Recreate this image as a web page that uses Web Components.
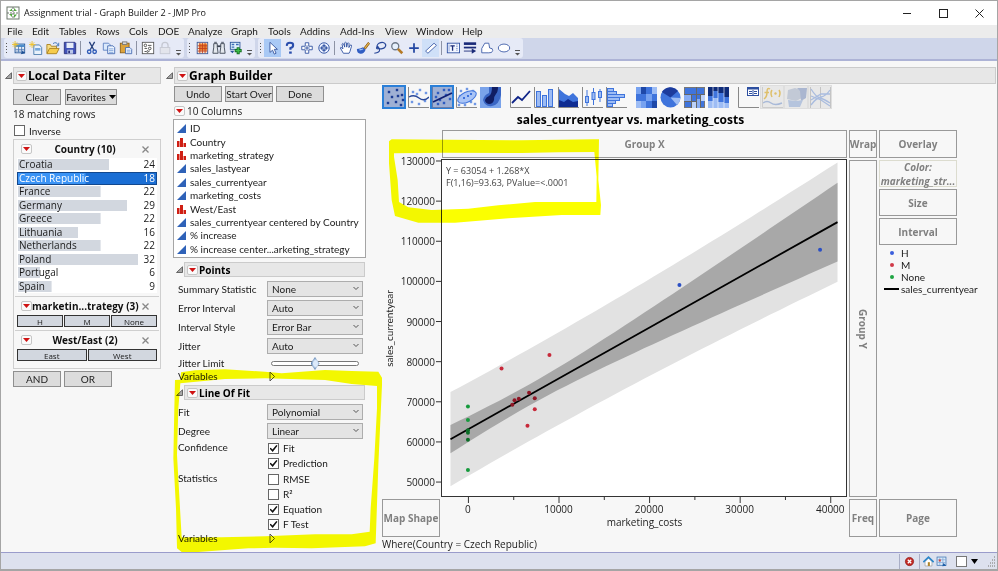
<!DOCTYPE html>
<html lang="en">
<head>
<meta charset="utf-8">
<title>Assignment trial - Graph Builder 2 - JMP Pro</title>
<style>
html,body{height:100%}
body{margin:0;background:#a5a5a5;font:10px/14px "Open Sans","Noto Sans",sans-serif;color:#1a1a1a;--narrow:Lato,"Open Sans",sans-serif}
</style>
</head>
<body>
<app-window></app-window>
<script>
const BASE = `*,:host{box-sizing:border-box}button,select,input{font:inherit;color:inherit;margin:0}button{cursor:default}`;
function define(name, css, html, setup){
  customElements.define(name, class extends HTMLElement{
    connectedCallback(){
      if(this.shadowRoot) return;
      const root = this.attachShadow({mode:'open'});
      root.innerHTML = `<style>${BASE}${css}</style>` + (typeof html === 'function' ? html(this) : html);
      if(setup) setup(this, root);
    }
  });
}

/* ---------- icons ---------- */
const dots = (pts, c, r=1) => pts.map(p=>`<rect x="${p[0]-r}" y="${p[1]-r}" width="${2*r}" height="${2*r}" fill="${c}"/>`).join('');
const axes = '<path d="M.5 0V20.5H21" fill="none" stroke="#888"/>';
const I16 = {
  app:'<rect x="2" y="2" width="12" height="12" fill="#fff" stroke="#6b776b"/><path d="M8 2V14M2 8H14" stroke="#6b776b" stroke-dasharray="2 1"/><path d="M4 6h3V3.500zM9 3v3h3zM4 9h3v3zM9 13V9.500h3z" fill="#55a843"/>',
  newtable:'<rect x="3.500" y="3.500" width="11" height="10" fill="#fff" stroke="#1c4f94"/><rect x="4" y="4" width="10" height="3" fill="#4d8fce"/><path d="M4 9.500H14M4 11.500H14M7.500 6V13M11 6V13" stroke="#4f79b5"/><path d="M3.500 0V8M0 4H7.500M1 1.500l5 5M6 1.500l-5 5" stroke="#f0c22e"/><path d="M10 15l2-4 3 3z" fill="#1c4f94"/>',
  newscript:'<path d="M5.500 4.500H12l2.500 3V15.500H5.500z" fill="#e8f1fb" stroke="#4477aa"/><rect x="7" y="8" width="6" height="3" fill="#74a7db"/><path d="M3.500 0V8M0 4H7.500M1 1.500l5 5M6 1.500l-5 5" stroke="#f0c22e"/>',
  open:'<path d="M1 14V4h4l1 2h6v3" fill="#f7dc83" stroke="#a87f1d"/><path d="M1 14.500L4 8.500H15L12 14.500z" fill="#f6cc4d" stroke="#a87f1d"/><path d="M8 3q4-3 6 2M14.500 2v3.500h-3" fill="none" stroke="#3a70b5"/>',
  save:'<path d="M1.500 1.500h12l1 1v12H1.500z" fill="#4152b8" stroke="#29307c"/><rect x="4" y="2" width="8" height="6" fill="#e6ecf8"/><rect x="5" y="10" width="6.500" height="4.500" fill="#b9c6e8"/><rect x="6" y="11" width="2" height="3" fill="#29307c"/>',
  cut:'<path d="M5 1L10 10M11 1L6 10" stroke="#26407c" stroke-width="1.500"/><circle cx="4.800" cy="12.300" r="2" fill="none" stroke="#2c59b6" stroke-width="1.500"/><circle cx="11" cy="12.300" r="2" fill="none" stroke="#2c59b6" stroke-width="1.500"/>',
  copy:'<path d="M1.500 2.500h6l2 2v6H1.500z" fill="#dbe9fb" stroke="#5a7fc0"/><path d="M6.500 5.500h6l2 2v7h-8z" fill="#eef5ff" stroke="#4168b0"/><path d="M8 9h5M8 11h5M8 13h5" stroke="#7ba0d8"/>',
  paste:'<rect x="1.500" y="2.500" width="10" height="11" fill="#dca33c" stroke="#8a5f17"/><rect x="4" y="1" width="5" height="3" fill="#d9d9d9" stroke="#777"/><path d="M7.500 7.500h5l2 2v5h-7z" fill="#eef5ff" stroke="#4168b0"/><path d="M9 10.500h4M9 12.500h4" stroke="#7ba0d8"/>',
  prefs:'<rect x="1.500" y="1.500" width="13" height="13" fill="#fff" stroke="#555"/><circle cx="5" cy="5" r="1.500" fill="none" stroke="#444"/><path d="M8 5h4M4 8.500h3M9 11.500h1M4 12h2" stroke="#444"/><circle cx="10" cy="8.500" r="1.500" fill="none" stroke="#444"/><circle cx="7.500" cy="12" r="1" fill="none" stroke="#444"/>',
  lock:'<path d="M4.500 8V5a3.500 3.500 0 0 1 7 0v3" fill="none" stroke="#c5c8d2" stroke-width="1.500"/><rect x="2.500" y="7.500" width="11" height="7" fill="#e3e5ec" stroke="#c5c8d2"/>',
  grid:'<rect x="2.500" y="1.500" width="12" height="13" fill="#f4e6d0" stroke="#3b5a9b"/><rect x="5" y="3" width="9" height="8" fill="#ee8a32"/><path d="M5.500 2V14M8.500 2V14M11.500 2V14M3 5.500H14M3 8.500H14M3 11.500H14" stroke="#c23d1d"/>',
  find:'<path d="M2 3h4v4l1 7H1l1-7zM10 3h4v4l1 7H9l1-7z" fill="#e4e8ee" stroke="#3a4250"/><path d="M6 6h4" stroke="#3a4250" stroke-width="2"/><path d="M2.500 1.500h3M10.500 1.500h3" stroke="#3a4250"/>',
  addrows:'<rect x="1.500" y="1.500" width="11" height="8" fill="#dff0fb" stroke="#28549a"/><path d="M3 4h3M8 4h3M3 7h3" stroke="#3b6cb8" stroke-width="1.500"/><path d="M1 11h5l-2 3z" fill="#28549a"/><path d="M10.500 7V15M6.500 11H14.500" stroke="#167021" stroke-width="3.500"/><path d="M10.500 8V14M7.500 11H13.500" stroke="#3fc04c" stroke-width="1.500"/>',
  arrow:'<path d="M4.500 1.500V13l3-2.500 2 4.500 2-1-2-4.500h3.500z" fill="#fff" stroke="#33529b"/>',
  help:'<path d="M4.500 5.500Q4 2 8 2t3.500 3Q11.500 7 8.500 8V10" fill="none" stroke="#2a4dac" stroke-width="2.500"/><rect x="7" y="12" width="3" height="2.500" fill="#2a4dac"/>',
  plusbox:'<path d="M6 2h4v4h4v4h-4v4H6v-4H2V6h4z" fill="#fff" stroke="#2d4fa0"/><path d="M8 5v6M5 8h6" stroke="#2d4fa0"/>',
  target:'<circle cx="8" cy="8" r="6" fill="#eaf0ff" stroke="#2d4fa0"/><circle cx="8" cy="8" r="3" fill="none" stroke="#2d4fa0"/><path d="M8 3v10M3 8h10" stroke="#2d4fa0"/><circle cx="8" cy="8" r="1.500" fill="#fff" stroke="#2d4fa0"/>',
  hand:'<path d="M5 14L1.500 8Q1.500 6.500 3.500 8L4.500 9 3.500 3.500Q4 2 5.300 3.500L6.500 7 6.500 2Q7.500.8 8.400 2L8.800 7 9.800 2.500Q11 1.500 11.500 3L11.300 7.500 13 4.500Q14.500 4 14.300 6L12.500 12 11.500 14z" fill="#fff" stroke="#2d4fa0"/>',
  brush:'<path d="M9 8L14 1.500 15.500 3 11 9z" fill="#e5b54c" stroke="#8b5c18"/><path d="M1 9q4 0 7-2l3 3q-2 5-6 4.500Q1 14 1 9z" fill="#315ec3"/><path d="M4 10q3 0 4-1" stroke="#9cc2f5" stroke-width="1.500" fill="none"/>',
  lasso:'<ellipse cx="9.500" cy="5.500" rx="5" ry="3.500" transform="rotate(-15 9 5)" fill="none" stroke="#29489a" stroke-width="1.500"/><path d="M6 9Q3 9 4.500 7t3 3Q8 13 1.500 14" fill="none" stroke="#29489a" stroke-width="1.300"/>',
  zoom:'<circle cx="6" cy="6" r="4" fill="#e7f1fd" stroke="#6d7888" stroke-width="1.500"/><path d="M9 9L14 14" stroke="#b57a26" stroke-width="3"/>',
  cross:'<path d="M8 2.500V13.500M2.500 8H13.500" stroke="#2447a3" stroke-width="2"/>',
  line:'<path d="M1.800 11.500L11.500 2.500 14.200 5 4.500 14z" fill="#fff" stroke="#3b5aa7"/>',
  text:'<rect x="1.500" y="2.500" width="14" height="11" fill="#f2f6ff" stroke="#2d4fa0"/><path d="M5 5.500H10M7.500 5v6" stroke="#1c2d78" stroke-width="1.500"/><path d="M12.500 4v8" stroke="#2d4fa0" stroke-dasharray="1 1"/><path d="M3.500 4v8" stroke="#8aa1d7"/>',
  lines:'<path d="M1 3H15" stroke="#1a2a78" stroke-width="3"/><path d="M1 7.500H15" stroke="#1a2a78" stroke-width="2"/><path d="M1 11.500H11" stroke="#1a2a78"/><path d="M10 8.500L15 11.500 10 14.500z" fill="#1a2a78"/>',
  poly:'<path d="M2 8.500L5.500 2.500H10L11 8q4 0 3.500 3T10 13.500H2z" fill="#fff" stroke="#3b5aa7"/>',
  ellipse:'<ellipse cx="8" cy="8" rx="6.500" ry="4.500" fill="#fff" stroke="#3b5aa7"/>',
  err:'<circle cx="8" cy="8" r="6" fill="#c22a25" stroke="#8e1713"/><path d="M5.500 5.500l5 5M10.500 5.500l-5 5" stroke="#fff" stroke-width="2"/>',
  home:'<path d="M3 8v6.500h10V8L8 3z" fill="#fff" stroke="#9a9a9a"/><path d="M.5 9L8 1.800 15.500 9" fill="none" stroke="#2c86c9" stroke-width="2.500"/><rect x="7" y="9" width="3" height="5.500" fill="#b0852a"/>',
  table:'<rect x="1.500" y="1.500" width="13" height="12" fill="#dbeaf9" stroke="#3269ab"/><path d="M2 5.500H14M2 9.500H14M5.500 2V13M10 2V13" stroke="#7ea5d4"/><rect x="4" y="5" width="3" height="3" fill="#d4433a"/><path d="M9 15l2-5 4 4z" fill="#1c5ea8"/>'
};
const B='#3f74dc', N='#0f2c92', L='#9dbcf4';
const scat=[[5,5],[13,3],[8,10],[18,8],[4,16],[12,15],[19,13],[14,9],[17,18]];
const I21 = {
  points: dots(scat,'#1b3c94',1.2),
  smooth: axes+dots([[5,5],[12,3],[18,6],[9,7],[4,15],[11,17],[17,14]],'#6f97e4',1.2)+'<path d="M1 10q5 -3 10 1t10-1" fill="none" stroke="#29489a" stroke-width="1.300"/>',
  fit: '<path d="M.5 0V20.500H21" fill="none" stroke="#667aa8"/>'+dots([[6,6],[12,3],[17,3],[14,8],[4,10],[8,13],[6,17],[12,16],[18,12]],'#2f5cc0',1.2)+'<path d="M1 15L20 6" stroke="#0f1f73" stroke-width="1.800"/>',
  ell: axes+dots([[5,4],[11,2],[17,4],[4,9],[15,15],[9,18],[19,17],[3,18]],'#6f97e4',1.2)+'<ellipse cx="11" cy="10" rx="10" ry="5" transform="rotate(-27 11 10)" fill="#a9c4f6" stroke="#3f74dc"/>'+dots([[8,11],[12,9],[15,7]],'#3f74dc'),
  contour:'<rect width="21" height="21" fill="#7aa3ea"/><path d="M9 0H21V8Q19 18 12 19T3 13Q4 8 9 6z" fill="#3a66c4"/><path d="M12 0h6q0 5-2 7-2 2-2 6-1 4-5 4-4-1-4-4 1-3 4-4 3-2 3-9z" fill="#101d63"/>',
  linec: axes+'<path d="M2 16L8 10l4 3L20 4" fill="none" stroke="#0f2488" stroke-width="1.800"/>',
  bars: axes+`<g fill="${L}" stroke="${B}"><rect x="2.500" y="4.500" width="4" height="15"/><rect x="8.500" y="8.500" width="4" height="11"/><rect x="14.500" y="2.500" width="4" height="17"/></g>`,
  area: axes+`<path d="M1 20V2l6 5 4 2 4-3 5 5v9z" fill="${B}"/><path d="M1 20v-7l5 2 4-3 5 3 5-1v6z" fill="${N}"/>`,
  box: axes+`<g stroke="${B}" fill="${L}"><path d="M5 3V19M11.500 1V18M18 2V15"/><rect x="3.500" y="9.500" width="3" height="6"/><rect x="10" y="5.500" width="3" height="7"/><rect x="16.500" y="4.500" width="3" height="6"/></g>`,
  hist: axes+`<g fill="${L}" stroke="${B}"><rect x="1.500" y="1.500" width="6" height="3"/><rect x="1.500" y="4.500" width="9" height="3"/><rect x="1.500" y="7.500" width="17" height="3"/><rect x="1.500" y="10.500" width="12" height="3"/><rect x="1.500" y="13.500" width="8" height="3"/><rect x="1.500" y="16.500" width="5" height="3"/></g>`,
  heat:`<rect width="21" height="21" fill="${B}"/><path d="M0 0h5v7H0zM10 7h6v7h-6zM5 14h5v7H5z" fill="#77a2f0"/><path d="M5 0h5v7H5zM16 14h5v7h-5z" fill="#1e48a8"/><path d="M16 0h5v7h-5zM0 14h5v7H0z" fill="${L}"/>`,
  pie:`<circle cx="10.500" cy="10.500" r="10" fill="${B}"/><path d="M10.500 10.500L1.800 5A10 10 0 0 1 18 4z" fill="#1c3b9c"/><path d="M10.500 10.500L20.500 11A10 10 0 0 1 17 18z" fill="${L}"/>`,
  tree:`<rect x=".5" y=".5" width="20" height="20" fill="${B}" stroke="#777"/><path d="M0 7h7v7H0zM12 12h4v9h-4z" fill="#88adf3"/><path d="M16 8h5v6h-5zM7 15h5v6H7z" fill="#bcd1f8"/><path d="M0 7.500H21M7.500 8V21M12.500 0V21M0 14.500H12M16.500 8V21" stroke="#666" fill="none"/>`,
  mosaic:`<rect width="21" height="21" fill="#3f74dc"/><path d="M0 0h5v9H0zM5 0h5v4H5zM10 0h6v6h-6zM16 0h5v10h-5z" fill="#0f2c7a"/><path d="M0 14h5v7H0zM5 11h5v10H5zM10 15h6v6h-6zM16 16h5v5h-5z" fill="${L}"/><path d="M5 0V21M10 0V21M16 0V21" stroke="#fff" stroke-opacity=".6"/>`,
  caption: axes+'<rect x="9.500" y=".5" width="11" height="8" fill="#fff" stroke="#2d4fa0"/><path d="M10 1.500H20" stroke="#2d4fa0" stroke-width="2"/><path d="M11 4.500h3M16 4.500h3M11 6.500h3M16 6.500h3M15 3v5" stroke="#2d4fa0"/>',
  formula:'<g opacity=".6"><path d="M8 2Q5 0 5 5T2 12M2.500 5.500H7M10 3q-2 3 0 7M17 3q2 3 0 7" fill="none" stroke="#d8a417" stroke-width="1.500"/><circle cx="13.500" cy="6.500" r="1.200" fill="#d8a417"/><path d="M1 16q4-3 8 0t11 0" fill="none" stroke="#7e9bce" stroke-width="1.500"/></g><path d="M.5 0V20.500H21" fill="none" stroke="#ccc"/>',
  map:'<path d="M2 3l7-2 6 2 1 8-6 3-9-2z" fill="#c2c9d6"/><path d="M11 1h10l-1 10-5 3-1-10z" fill="#aab6d0"/><path d="M2 13l8 1 7-1-3 7H3z" fill="#b5c4dd"/>',
  parallel:'<path d="M.5 0V21M10.500 0V21M20.500 0V21" stroke="#c4c4c4"/><path d="M1 2q5 8 9 9t10 5M1 18q5-7 10-8t9-7M1 9l10 4 9 6M1 13l10-6 9 0" fill="none" stroke="#a9bcdf" stroke-width="1.300"/>'
};
define('ui-icon', `:host{display:block;flex:none;width:16px;height:16px}:host([large]){width:21px;height:21px}svg{display:block;width:100%;height:100%}`,
  el=>{const n=el.getAttribute('name');return I21[n]?`<svg viewBox="0 0 21 21" aria-hidden="true">${I21[n]}</svg>`:`<svg viewBox="0 0 16 16" aria-hidden="true">${I16[n]||''}</svg>`});

/* ---------- window chrome ---------- */
define('title-bar', `:host{display:flex;align-items:center;height:24px;background:#fff;padding:0 0 0 4px;color:#111}
  span{flex:1;margin-left:3px;font-size:9px}
  button{border:0;background:none;width:36px;height:22px;padding:0;display:grid;place-items:center}svg{display:block}ui-icon{width:16px;height:16px}`,
  `<ui-icon name="app"></ui-icon><span>Assignment trial - Graph Builder 2 - JMP Pro</span>
  <button aria-label="Minimize"><svg width="9" height="9"><path d="M0 4.500H8" stroke="#222"/></svg></button>
  <button aria-label="Maximize"><svg width="9" height="9"><rect x=".5" y=".5" width="8" height="8" fill="none" stroke="#222"/></svg></button>
  <button aria-label="Close"><svg width="9" height="9"><path d="M.5.5l8 8M8.500.5l-8 8" stroke="#222"/></svg></button>`);

define('menu-bar', `:host{display:flex;height:13px;background:#ececec;padding-left:6px;font-family:var(--narrow)}
  button{border:0;background:none;padding:0;line-height:13px;font-size:10px;text-align:left;white-space:nowrap}`,
  [['File',25],['Edit',27],['Tables',37],['Rows',33],['Cols',29],['DOE',30],['Analyze',43],['Graph',37],['Tools',32],['Addins',40],['Add-Ins',45],['View',31],['Window',46],['Help',30]]
  .map(m=>`<button style="width:${m[1]}px">${m[0]}</button>`).join(''));

define('tool-group', `:host{display:flex;align-items:center;height:20px;background:#e6eaf7;border-radius:3px;padding-left:1px}
  .grip{width:5px;height:12px;background:radial-gradient(circle,#555 0 1px,transparent 1px) 0 0/3px 3px repeat-y}
  button{border:0;background:none;width:17px;height:18px;padding:0;display:grid;place-items:center}
  button.on{background:#a9c9f5}button.soft{background:#cfe0f8}
  ui-icon{width:14px;height:14px}
  hr{width:1px;height:14px;border:0;background:#8d93a5;margin:0 2px}
  .more{width:11px;align-self:end;height:10px}`,
  el=>`<span class="grip"></span>`+el.getAttribute('items').split(' ').map(n=>n==='|'?'<hr>':
   `<button aria-label="${n.replace(/[!~]/,'')}" class="${n[0]==='!'?'on':n[0]==='~'?'soft':''}"><ui-icon name="${n.replace(/[!~]/,'')}"></ui-icon></button>`).join('')
   +`<button class="more" aria-label="More"><svg width="5" height="6"><path d="M0 .5H5" stroke="#555"/><path d="M0 3h5L2.500 5.500z" fill="#555"/></svg></button>`);
define('tool-bar', `:host{display:flex;gap:3px;height:23px;background:#cfd6ea;border-bottom:2px solid #adb3d6;padding:0 3px}`,
  `<tool-group items="newtable newscript open save | cut copy paste | prefs lock"></tool-group>
   <tool-group items="grid find addrows"></tool-group>
   <tool-group items="!arrow help plusbox target | hand brush lasso zoom cross ~line | text lines poly ellipse"></tool-group>`);

define('status-bar', `:host{display:flex;flex:none;justify-content:flex-end;align-items:center;height:17px;background:#dde1ee;border-top:1px solid #9a9ccb;padding-right:1px}
  hr{width:1px;height:15px;border:0;background:#a9aec6;margin:0 3px 0 0}
  .x{width:11px;height:11px;margin:0 4px 0 1px}ui-icon{width:11px;height:11px}.g{display:flex;gap:2px;margin-right:9px}
  input{appearance:none;width:11px;height:11px;border:1px solid #777;background:#fff}
  button{border:0;background:none;padding:0;width:14px;height:14px;display:grid;place-items:center;margin-right:5px}`,
  `<hr><ui-icon name="err" class="x"></ui-icon><hr>
   <div class="g"><ui-icon name="home"></ui-icon><ui-icon name="table"></ui-icon></div>
   <input type="checkbox" aria-label="Exclude"><button aria-label="Window list"><svg width="7" height="5"><path d="M0 0h7L3.500 5z"/></svg></button>
   <svg width="10" height="12" aria-hidden="true"><path d="M8 2h1M6 5h1M8 5h1M4 8h1M6 8h1M8 8h1M2 11h1M4 11h1M6 11h1M8 11h1" stroke="#999" stroke-width="1.500"/></svg>`);

/* ---------- shared pieces ---------- */
define('red-menu', `:host{display:block;flex:none}button{display:grid;place-items:center;width:11px;height:10px;padding:0;background:#fafafa;border:1px solid #c6c6c6;border-radius:2px}svg{display:block}`,
  `<button aria-label="Options"><svg width="7" height="4"><path d="M0 0h7L3.500 4z" fill="#cf1212"/></svg></button>`);

define('outline-head', `:host{display:flex;align-items:center;gap:1px}
  svg{flex:none;display:block}
  .bar{flex:1;display:flex;align-items:center;gap:1px;height:17px;background:#e7e7e7;border:1px solid #cbcbcb;padding-left:2px;font-size:12px;font-weight:700;color:#000;white-space:nowrap}
  :host([small]) .bar{height:15px;font-size:10px}`,
  `<svg width="7" height="7" aria-hidden="true"><path d="M.5 6.500L6.500.8V6.500z" fill="#a9a9a9" stroke="#666"/></svg><div class="bar"><red-menu></red-menu><slot></slot></div>`);

define('push-button', `:host{display:block;width:48px;font-family:var(--narrow)}
  button{display:flex;align-items:center;justify-content:center;gap:3px;width:100%;height:16px;padding:0;border:1px solid #8f8f8f;background:#dcdcdc;font-size:10px;line-height:14px;white-space:nowrap}
  svg{flex:none}
  :host([menu]){width:52px}`,
  el=>`<button><slot></slot>${el.hasAttribute('menu')?'<svg width="7" height="4"><path d="M0 0h7L3.500 4z"/></svg>':''}</button>`);

define('check-item', `:host{display:block;font-family:var(--narrow)}label{display:flex;align-items:center;gap:4px;height:15px;white-space:nowrap;font-size:10px;padding-left:1px}
  input{appearance:none;width:11px;height:11px;border:1px solid #666;background:#fff;display:grid;place-items:center}
  input:checked::before{content:"";width:8px;height:7px;background:#111;clip-path:polygon(0 50%,15% 38%,38% 65%,85% 0,100% 12%,40% 100%)}`,
  el=>`<label><input type="checkbox" ${el.hasAttribute('checked')?'checked':''}><span><slot></slot></span></label>`);

/* ---------- local data filter ---------- */
define('filter-head', `:host{display:flex;align-items:center;height:18px;padding:0 4px;font-weight:700;font-size:10px;color:#111}
  span{flex:1;text-align:center;white-space:nowrap}button{border:0;background:none;padding:0;width:15px;height:7px;display:grid;place-items:center}svg{display:block}`,
  `<red-menu></red-menu><span><slot></slot></span><button aria-label="Remove"><svg width="7" height="7"><path d="M.5.5l6 6M6.500.5l-6 6" stroke="#888" stroke-width="1.300"/></svg></button>`);

const countries=[['Croatia',24],['Czech Republic',18],['France',22],['Germany',29],['Greece',22],['Lithuania',16],['Netherlands',22],['Poland',32],['Portugal',6],['Spain',9]];
define('country-list', `:host{display:grid;grid-auto-rows:1fr;height:135px;background:#fff}
  div{display:flex;align-items:center;justify-content:space-between;padding:0 2px;line-height:13px;background:linear-gradient(#d2d7df,#d2d7df) 1px 1px/var(--w) 11px no-repeat}
  .sel{background:linear-gradient(#3a93f5,#3a93f5) 0 0/var(--w) 100% no-repeat #1a6ed4;color:#fff;outline:1px solid #12488e;outline-offset:-1px}`,
  countries.map(([n,v])=>`<div role="option" aria-selected="${v===18}" class="${v===18?'sel':''}" style="--w:${Math.round(v*2.7)}%"><span>${n}</span><span>${v}</span></div>`).join(''),
  el=>el.setAttribute('role','listbox'));

define('level-row', `:host{display:flex;gap:1px;padding:0 4px}button{flex:1;height:12px;padding:0;border:1px solid #333;background:#d2d7df;font-size:8px;line-height:9px}`,
  el=>el.getAttribute('levels').split(',').map(l=>`<button>${l}</button>`).join(''));

define('data-filter', `:host{display:block;width:156px}
  .body{margin-left:8px}.row{display:flex;gap:4px}.first{margin-top:5px}
  p{margin:2px 0;line-height:14px}
  .box{border:1px solid #cfcfcf;margin-top:1px;padding:0 3px 7px}
  .sec{border-top:1px solid #cfcfcf;margin:3px -2px 0;padding:0 2px}
  .sec level-row{margin:0 -4px}.logic{margin-top:2px;gap:3px}`,
  `<outline-head>Local Data Filter</outline-head>
   <div class="body"><div class="row first"><push-button>Clear</push-button><push-button menu>Favorites</push-button></div>
   <p>18 matching rows</p><check-item>Inverse</check-item>
   <div class="box"><filter-head>Country (10)</filter-head><country-list></country-list>
     <div class="sec"><filter-head>marketin...trategy (3)</filter-head><level-row levels="H,M,None"></level-row></div>
     <div class="sec"><filter-head>West/East (2)</filter-head><level-row levels="East,West"></level-row></div></div>
   <div class="row logic"><push-button>AND</push-button><push-button>OR</push-button></div></div>`);

/* ---------- column list and options ---------- */
const cols=[['c','ID'],['n','Country'],['n','marketing_strategy'],['c','sales_lastyear'],['c','sales_currentyear'],['c','marketing_costs'],['n','West/East'],['c','sales_currentyear centered by Country'],['c','% increase'],['c','% increase center...arketing_strategy']];
define('column-list', `:host{display:grid;grid-auto-rows:1fr;height:139px;border:1px solid #a5a5a5;background:#fff;padding:2px 0 1px 3px;white-space:nowrap;font-family:var(--narrow)}
  div{display:flex;align-items:center;gap:4px;line-height:13px}svg{flex:none}`,
  cols.map(([t,n])=>`<div role="option">${t==='c'
    ?'<svg width="9" height="9"><path d="M0 9L9 0V9z" fill="#2f62b8"/></svg>'
    :'<svg width="9" height="9"><path d="M0 3h2.500v6H0zM3 0h3v9H3zM6.500 5h2.500v4H6.500z" fill="#cf1f14"/></svg>'}<span>${n}</span></div>`).join(''),
  el=>el.setAttribute('role','listbox'));

define('option-select', `:host{display:block;font-family:var(--narrow)}label{display:grid;grid-template-columns:89px 96px;height:19px;align-items:center;font-size:10px}
  .s{position:relative}select{appearance:none;width:100%;height:16px;border:1px solid #adadad;border-radius:0;background:#e4e4e4;padding:0 4px;font-size:10px;line-height:14px;display:block}
  svg{position:absolute;right:4px;top:5px;pointer-events:none}`,
  el=>`<label><span>${el.getAttribute('label')}</span><span class="s"><select><option>${el.getAttribute('value')}</option></select><svg width="6" height="5"><path d="M.5 1L3 3.500 5.500 1" fill="none" stroke="#555"/></svg></span></label>`);

define('option-row', `:host{display:grid;grid-template-columns:89px 96px;font-size:10px;line-height:13px;font-family:var(--narrow)}`,
  el=>`<span>${el.getAttribute('label')}</span><div><slot></slot></div>`);

define('jitter-slider', `:host{display:block;height:13px;padding:0 4px}
  input{appearance:none;display:block;width:100%;height:13px;background:none}
  input::-webkit-slider-runnable-track{height:5px;border:1px solid #777;border-radius:3px;background:#fff}
  input::-webkit-slider-thumb{appearance:none;width:9px;height:13px;margin-top:-5px;clip-path:polygon(50% 0,100% 50%,50% 100%,0 50%);border:0;background:radial-gradient(#dceafb 0 2px,#5f86b5 4px)}`,
  `<input type="range" aria-label="Jitter Limit" value="50">`);

define('graph-options', `:host{display:block;position:relative;width:193px;flex:none}
  .btns{display:flex;gap:3px;padding:2px 0 0 1px}
  .cols{display:flex;align-items:center;gap:2px;height:14px;margin:2px 0 1px 1px}
  .sect{margin:4px 1px 0 3px}.opts{margin-left:5px;padding-top:2px}
  .lof{margin-top:2px}.gap{margin-top:2px}.chk{margin-top:1px}
  .tri{border:0;background:none;padding:0 0 0 2px;display:block}svg{display:block}`,
  `<div class="btns"><push-button>Undo</push-button><push-button>Start Over</push-button><push-button>Done</push-button></div>
   <div class="cols"><red-menu></red-menu><span>10 Columns</span></div>
   <column-list></column-list>
   <outline-head small class="sect">Points</outline-head>
   <div class="opts">
    <option-select label="Summary Statistic" value="None"></option-select>
    <option-select label="Error Interval" value="Auto"></option-select>
    <option-select label="Interval Style" value="Error Bar"></option-select>
    <option-select label="Jitter" value="Auto"></option-select>
    <option-row class="gap" label="Jitter Limit"><jitter-slider></jitter-slider></option-row>
    <option-row label="Variables"><button class="tri" aria-label="Show variables"><svg width="6" height="12"><path d="M1 2L5.500 6.500 1 11z" fill="none" stroke="#555"/></svg></button></option-row>
   </div>
   <outline-head small class="sect lof">Line Of Fit</outline-head>
   <div class="opts">
    <option-select label="Fit" value="Polynomial"></option-select>
    <option-select label="Degree" value="Linear"></option-select>
    <option-row class="chk" label="Confidence"><check-item checked>Fit</check-item><check-item checked>Prediction</check-item></option-row>
    <option-row class="chk" label="Statistics"><check-item>RMSE</check-item><check-item>R²</check-item><check-item checked>Equation</check-item><check-item checked>F Test</check-item></option-row>
    <option-row label="Variables"><button class="tri" aria-label="Show variables"><svg width="6" height="12"><path d="M1 2L5.500 6.500 1 11z" fill="none" stroke="#555"/></svg></button></option-row>
   </div>`);

/* ---------- graph ---------- */
define('type-bar', `:host{display:flex;gap:6px}div{display:flex}
  button{width:24px;height:24px;padding:0;border:1px solid transparent;background:none;display:grid;place-items:center}
  .on{background:#9fb0d4;border:2px solid #2a7fd8}.off{background:#e8e8e8;border-color:#dedede}`,
  '!points smooth !fit ell contour|linec bars area box hist|heat pie tree mosaic|caption -formula -map -parallel'.split('|')
   .map(g=>'<div>'+g.split(' ').map(n=>{const k=n.replace(/[!-]/,'');return `<button aria-label="${k}" class="${n[0]==='!'?'on':n[0]==='-'?'off':''}" ${n[0]==='-'?'disabled':''}><ui-icon large name="${k}"></ui-icon></button>`}).join('')+'</div>').join(''));

define('drop-zone', `:host{display:flex;align-items:center;justify-content:center;border:1px solid #999;color:#808080;font-weight:700;font-size:10px;text-align:center;white-space:nowrap;min-width:0}
  :host([vertical]){writing-mode:vertical-rl}
  :host([used]){border-color:#dcdccf;font-style:italic;line-height:14px}`, `<slot></slot>`);

define('fit-plot', `:host{display:block;position:relative}svg{display:block;overflow:visible}
  .main{width:100%;height:100%}text{font-size:10px;fill:#222}.eq{font-size:9px;fill:#444}.nm{font-family:var(--narrow)}`,
  ()=>{
    const W=406,H=338,x0=-2863,x1=41850,y0=46278,y1=130248;
    const px=v=>(v-x0)/(x1-x0)*100, py=v=>(y1-v)/(y1-y0)*100;
    const line=x=>280-0.5611*(x-8.5);
    const fitH=x=>Math.sqrt(112.5+Math.pow(0.1222*(x-85.5),2));
    const predH=x=>Math.sqrt(fitH(x)**2+2025);
    const band=h=>{const up=[],dn=[];for(let i=0;i<=40;i++){const x=8.5+388*i/40;up.push(`${x.toFixed(1)},${(line(x)-h(x)).toFixed(1)}`);dn.unshift(`${x.toFixed(1)},${(line(x)+h(x)).toFixed(1)}`)}return up.concat(dn).join(' ')};
    const pts=[['#2b4fc4',[[238,125.300],[379,90]]],['#c7293a',[[59.700,209],[107.700,195.700],[93,250],[85.700,266.500]]],['#8f1524',[[93,239],[87.300,233.500],[77,239.500],[72.700,241],[70.500,245.500]]],['#159a3c',[[26,247.300],[26,260.800],[26,311]]],['#0a6e26',[[26,271],[26,273.500],[26,280.500]]]];
    let s=`<svg class="main"><rect x="-.5" y="-.5" width="100%" height="100%" fill="#fff"/>
     <svg width="100%" height="100%" viewBox="0 0 ${W} ${H}" preserveAspectRatio="none"><polygon points="${band(predH)}" fill="#e2e2e2"/><polygon points="${band(fitH)}" fill="#a8a8a8"/><path d="M8.500 ${line(8.5)}L396.500 ${line(396.5)}" stroke="#000" stroke-width="1.800"/></svg>`;
    pts.forEach(([c,a])=>a.forEach(p=>s+=`<circle cx="${p[0]/W*100}%" cy="${p[1]/H*100}%" r="2" fill="${c}"/>`));
    s+=`<rect x="-.5" y="-.5" width="100%" height="100%" fill="none" stroke="#333"/>`;
    for(let v=50000;v<=130000;v+=10000) s+=`<line x1="-6" x2="0" y1="${py(v)}%" y2="${py(v)}%" stroke="#333"/><text x="-7" y="${py(v)}%" dy="4" text-anchor="end">${v}</text>`;
    for(let v=0;v<=40000;v+=5000){const m=v%10000===0;s+=`<svg x="${px(v)}%" y="100%" overflow="visible"><path d="M.5 0V${m?6:3}" stroke="#333"/>${m?`<text y="16" text-anchor="middle">${v}</text>`:''}</svg>`}
    s+=`<svg x="50%" y="100%" overflow="visible"><text y="29" text-anchor="middle">marketing_costs</text></svg>
     <svg x="0" y="50%" overflow="visible"><text class="nm" transform="translate(-49 0) rotate(-90)" text-anchor="middle">sales_currentyear</text></svg>
     <text class="eq" x="4" y="14">Y = 63054 + 1.268*X</text><text class="eq" x="4" y="26">F(1,16)=93.63, PValue=&lt;.0001</text></svg>`;
    return s;
  });

define('graph-legend', `:host{display:block;padding:0 0 0 5px;font-size:10px;line-height:12px;white-space:nowrap;font-family:var(--narrow)}
  div{display:flex;align-items:center;gap:2px}i{width:15px;display:grid;place-items:center}
  b{width:4px;height:4px;border-radius:2px;background:var(--c)}.ln b{width:15px;height:2px;border-radius:0}`,
  `<div style="--c:#3c5fdc"><i><b></b></i>H</div><div style="--c:#d03a48"><i><b></b></i>M</div><div style="--c:#1fa543"><i><b></b></i>None</div><div class="ln" style="--c:#000"><i><b></b></i>sales_currentyear</div>`);

define('graph-area', `:host{display:flex;flex-direction:column;flex:1;position:relative;padding:1px 39px 1px 0;min-width:0}
  h1{margin:3px 0 2px;font-size:12px;line-height:16px;text-align:center;font-weight:700;color:#000;padding-right:78px}
  .g{flex:1;display:grid;grid-template-columns:58px minmax(0,1fr) 28px 78px;grid-template-rows:28px minmax(0,1fr) 38px;gap:2px}
  .gx{grid-area:1/2}.wr{grid-area:1/3}.ov{grid-area:1/4}.pl{grid-area:2/2}.gy{grid-area:2/3}.side{grid-area:2/4}.ms{grid-area:3/1}.fr{grid-area:3/3}.pg{grid-area:3/4}
  .side{display:flex;flex-direction:column;gap:2px;min-width:0}.side drop-zone{height:27px}
  .where{line-height:14px}`,
  `<type-bar></type-bar><h1>sales_currentyear vs. marketing_costs</h1>
   <div class="g"><drop-zone class="gx">Group X</drop-zone><drop-zone class="wr">Wrap</drop-zone><drop-zone class="ov">Overlay</drop-zone>
    <fit-plot class="pl"></fit-plot><drop-zone class="gy" vertical>Group Y</drop-zone>
    <div class="side"><drop-zone used>Color:<br>marketing_str...</drop-zone><drop-zone>Size</drop-zone><drop-zone>Interval</drop-zone><graph-legend></graph-legend></div>
    <drop-zone class="ms">Map Shape</drop-zone><drop-zone class="fr">Freq</drop-zone><drop-zone class="pg">Page</drop-zone></div>
   <div class="where">Where(Country = Czech Republic)</div>`);

/* freehand highlighter strokes lie over the controls */
define('marker-stroke', `:host{display:block;position:absolute;pointer-events:none;mix-blend-mode:multiply}svg{display:block;overflow:visible}`,
  el=>`<svg width="240" height="150" viewBox="0 0 720 450" aria-hidden="true"><path fill="#fbff00" fill-rule="evenodd" d="${el.getAttribute('shape')==='equation'
   ?'M42 184L50 178 440 181 655 178 672 178 670 300 678 375 676 405 560 405 400 415 240 428 130 428 60 408 50 360 42 250zM57 220L200 218 440 219 550 217 658 216 665 290 664 366 480 366 370 376 280 386 170 390 100 382 72 366 68 300 57 230z'
   :'M30 15L46 14 48 -8 90 -14 180 -17 300 -10 350 -5 480 -15 560 -12 640 -10 651 8 651 30 640 270 632 505 600 514 440 520 330 518 250 520 100 531 50 531 36 520 33 400 25 250 28 100zM46 25L180 12 300 10 480 15 560 27 636 33 636 100 628 250 617 400 614 470 560 478 450 478 300 484 170 487 50 487 45 400 36 240 40 100z'}"/></svg>`);

define('graph-builder', `:host{display:flex;flex-direction:column;flex:1;min-width:0}.body{display:flex;gap:16px;flex:1;position:relative;margin-left:7px;min-height:0}
  .eq{left:202px;top:-4px}.fit{left:-8px;top:291px}`,
  `<outline-head>Graph Builder</outline-head><div class="body"><graph-options></graph-options><graph-area></graph-area>
   <marker-stroke class="eq" shape="equation"></marker-stroke><marker-stroke class="fit" shape="fit"></marker-stroke></div>`);

define('app-window', `:host{display:flex;flex-direction:column;height:100vh;min-height:571px;border:solid #a5a5a5;border-width:1px 1px 2px}
  main{flex:1;display:flex;gap:5px;background:#f7f7f7;padding:6px 1px 0 4px;min-height:0}`,
  `<title-bar></title-bar><menu-bar></menu-bar><tool-bar></tool-bar>
   <main><data-filter></data-filter><graph-builder></graph-builder></main><status-bar></status-bar>`);
</script>
</body>
</html>
